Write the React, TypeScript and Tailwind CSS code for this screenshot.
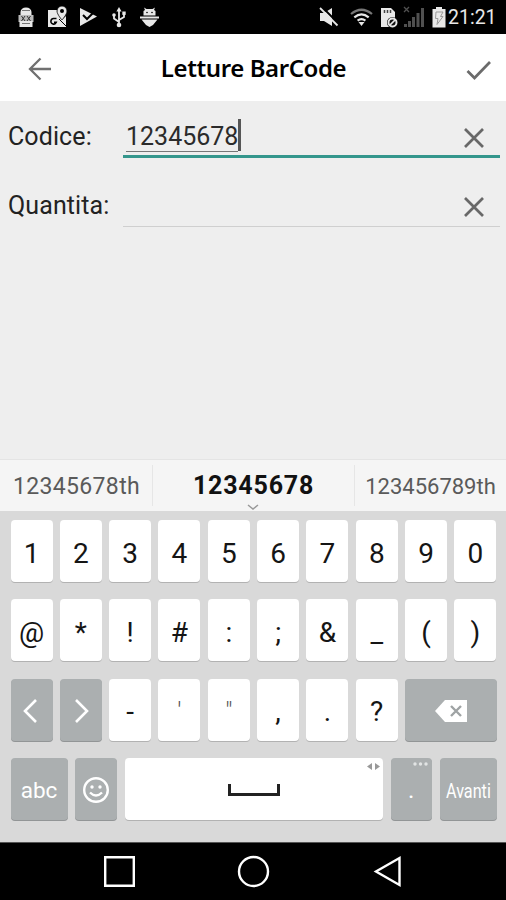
import type { ReactNode } from "react";
import clsx from "clsx";

const NUMBER_KEYS = ["1", "2", "3", "4", "5", "6", "7", "8", "9", "0"];
const SYMBOL_KEYS = ["@", "*", "!", "#", ":", ";", "&", "_", "(", ")"];
const PUNCTUATION_KEYS = ["-", "'", "\"", ",", ".", "?"];

interface KeyProps {
  children?: ReactNode;
  dark?: boolean;
  className?: string;
}

function Key({ children, dark, className = "w-[42px]" }: KeyProps) {
  return (
    <div
      className={clsx(
        "relative flex h-[62px] shrink-0 items-center justify-center rounded-[4px] text-[28px]",
        dark
          ? "bg-[#abafb0] text-white shadow-[0_1px_0_#929596]"
          : "bg-white text-[#151515] shadow-[0_1px_0_#b2b2b2]",
        className
      )}
    >
      {children}
    </div>
  );
}

function KeyRow({ children }: { children: ReactNode }) {
  return <div className="flex justify-between">{children}</div>;
}

// Plain character key, the glyph sits a little below the middle
function CharKey({ char }: { char: string }) {
  const quote = char === "'" || char === "\"";
  return (
    <Key>
      <span className={clsx("pt-[5px]", quote && "text-[25px] font-light text-[#555]")}>{char}</span>
    </Key>
  );
}

function StatusBar() {
  return (
    <div className="flex h-[34px] items-center bg-black pr-[9px] pl-[17px] text-[#e8e8e8]">
      {/* Notifications */}
      <div className="flex flex-1 items-center">
        <svg width="18" height="22" viewBox="0 0 18 22" fill="currentColor">
          <path d="M3.500 6Q4 1.500 9 1.500T14.500 6v3h-11z" />
          <path d="M1.500 9h15v7h-15z" opacity=".8" />
          <path d="M2.500 15h13v6h-13z" />
          <path d="M5 4.500h8M5 17.500h8" stroke="#777" />
          <path d="M4.500 10l3.500 5M8 10l-3.500 5M10 10l3.500 5M13.500 10L10 15" stroke="#333" strokeWidth="1" />
        </svg>
        <svg className="ml-[12px]" width="21" height="22" viewBox="0 0 21 22">
          <path d="M1 4h9l2 5 3 4 4-3v11H1z" fill="currentColor" />
          <path d="M9.500 12.500H7a2.800 2.800 0 1 0 2.300 3.800H7" fill="none" stroke="#000" strokeWidth="1.500" />
          <path d="M12 13l7 7" stroke="#000" strokeWidth="1" />
          <path d="M15 0a5 5 0 0 0-5 5c0 3.500 5 9 5 9s5-5.500 5-9a5 5 0 0 0-5-5z" fill="currentColor" stroke="#000" strokeWidth=".8" />
          <circle cx="15" cy="5" r="2" fill="#000" />
        </svg>
        <svg className="ml-[11px]" width="19" height="20" viewBox="0 0 19 20">
          <path d="M1 1l17 8.500L1 19z" fill="currentColor" />
          <path d="M4 8l4 4 8-8" fill="none" stroke="#000" strokeWidth="2" />
        </svg>
        <svg className="ml-[14px]" width="14" height="21" viewBox="0 0 14 21" fill="none" stroke="currentColor" strokeWidth="1.800">
          <path d="M7 3v15M7 15L2 11.500V8M7 13l5-3V6" />
          <path d="M7 0l2.600 4.500H4.400z" fill="currentColor" stroke="none" />
          <circle cx="7" cy="18" r="2.300" fill="currentColor" stroke="none" />
          <circle cx="2" cy="8" r="1.800" fill="currentColor" stroke="none" />
          <path d="M10.300 4.500h3.400v3.400h-3.400z" fill="currentColor" stroke="none" />
        </svg>
        <svg className="ml-[14px]" width="19" height="20" viewBox="0 0 19 20" fill="currentColor">
          <path d="M3.500 8.500V4l1.500-1L4 .5 6.500 2h6L15 .5 14 3l1.500 1v4.500z" />
          <path d="M0 9.500h19v2H0zM1.500 12.500h16L13 18l-3.500 2L6 18z" />
          <circle cx="7" cy="5.500" r=".8" fill="#000" />
          <circle cx="12" cy="5.500" r=".8" fill="#000" />
        </svg>
      </div>

      {/* System */}
      <svg width="21" height="20" viewBox="0 0 21 20">
        <path d="M1 6h4l8-5v18l-8-5H1z" fill="currentColor" />
        <path d="M3 0l17 17" stroke="#000" strokeWidth="2" />
        <path d="M1 1l17.500 17.500" stroke="currentColor" strokeWidth="1.800" />
      </svg>
      <svg className="ml-[10px]" width="23" height="18" viewBox="0 0 23 18" fill="none" stroke="currentColor" strokeWidth="2.200">
        <path d="M1 6Q11.500-2.500 22 6" stroke="#777" />
        <path d="M4.300 9.300q7.200-5.800 14.400 0" />
        <path d="M7.600 12.700q3.900-3 7.800 0" />
        <path d="M8.500 14h6l-3 4z" fill="currentColor" stroke="none" />
      </svg>
      <svg className="ml-[8px]" width="17" height="21" viewBox="0 0 17 21">
        <path d="M0 1h10l4 4v15H0z" fill="currentColor" />
        <path d="M3.500 3v3M6.500 3v3M9.500 3v3" stroke="#444" strokeWidth="1.500" />
        <circle cx="11.500" cy="15.500" r="5.500" fill="#111" />
        <circle cx="11.500" cy="15.500" r="4" fill="none" stroke="currentColor" strokeWidth="1.900" />
        <path d="M9 18l5-5" stroke="currentColor" strokeWidth="1.700" />
      </svg>
      <svg className="ml-[5px]" width="22" height="22" viewBox="0 0 22 22" fill="#505050">
        <path d="M1 18h3v3H1zM5 15h3v6H5zM9 11h3v10H9zM13.500 7h3v14h-3zM18 2h3v19h-3z" />
        <path d="M1 1l5 5M6 1L1 6" stroke="#505050" strokeWidth="1.300" />
      </svg>
      <svg className="ml-[7px]" width="14" height="21" viewBox="0 0 14 21">
        <path d="M4 0h6v2h3.500v18.500H.5V2H4z" fill="currentColor" />
        <path d="M4 5h7L8.500 9.500H11l-6 8 1-6H3.500z" fill="none" stroke="#999" />
      </svg>
      <span className="ml-[2px] w-[49px] pt-[1px] text-[19.500px] leading-none whitespace-nowrap">21:21</span>
    </div>
  );
}

function Header() {
  return (
    <header className="grid h-[67px] grid-cols-[50px_1fr_50px] items-center bg-white">
      <svg className="mt-[2px] ml-[28px]" width="24" height="24" viewBox="0 0 24 24" fill="none" stroke="#707070" strokeWidth="2.300">
        <path d="M23 12H2M12.500 1.500L2 12l10.500 10.500" />
      </svg>
      <h1 className="pl-[1px] text-center font-['Noto_Sans'] text-[24px] font-semibold tracking-[-0.42px] whitespace-nowrap text-black">
        Letture BarCode
      </h1>
      <svg className="mt-[4px] ml-[10px]" width="26" height="20" viewBox="0 0 26 20" fill="none" stroke="#6b6b6b" strokeWidth="2.700">
        <path d="M1.500 11L8.500 18 24 2" />
      </svg>
    </header>
  );
}

function ClearIcon() {
  return (
    <svg className="mr-[16px]" width="20" height="20" viewBox="0 0 20 20" fill="none" stroke="#686868" strokeWidth="2.700">
      <path d="M1 1l18 18M19 1L1 19" />
    </svg>
  );
}

interface FieldProps {
  label: string;
  value?: string;
  focused?: boolean;
}

function Field({ label, value, focused }: FieldProps) {
  return (
    <div className="flex h-[57px] pr-[6px] pl-[8px]">
      <label className="w-[115px] shrink-0 pt-[21px] text-[25px] leading-[30px] tracking-[0.1px] whitespace-nowrap text-[#222]">
        {label}
      </label>
      <div
        className={clsx(
          "flex flex-1 items-start justify-between pt-[18px] pl-[3px]",
          focused ? "border-b-[3px] border-[#34968c]" : "border-b border-[#cfcfcf]"
        )}
      >
        <div className="flex h-[33px]">
          {value && (
            <>
              <span className="h-[33px] border-b-[1.500px] border-[#777] text-[25px] leading-[35px] text-[#2b2b2b]">{value}</span>
              <span className="h-[32px] w-[3px] bg-[#555]" />
            </>
          )}
        </div>
        <div className="pt-[9px]">
          <ClearIcon />
        </div>
      </div>
    </div>
  );
}

function Suggestions() {
  return (
    <div className="relative grid h-[52px] grid-cols-[152px_203px_151px] items-center border-t border-[#e4e4e4] bg-[#f5f5f5] text-center whitespace-nowrap">
      <span className="pt-[3px] pl-[1px] text-[23px] tracking-[0.35px] text-[#5a5a5a]">12345678th</span>
      <span className="border-x border-[#e6e6e6] text-[25px] leading-[41px] font-bold tracking-[0.8px] text-[#111]">12345678</span>
      <span className="pt-[2px] text-[22px] text-[#5a5a5a]">123456789th</span>
      <svg className="absolute bottom-0 left-[247px]" width="12" height="7" viewBox="0 0 12 7" fill="none" stroke="#999" strokeWidth="1.500">
        <path d="M1 1l5 4 5-4" />
      </svg>
    </div>
  );
}

function Keyboard() {
  return (
    <div className="flex h-[331px] flex-col gap-[17.300px] bg-[#d9d9d9] pt-[9px] pr-[9.500px] pl-[10.500px]">
      <KeyRow>
        {NUMBER_KEYS.map((k) => (
          <CharKey key={k} char={k} />
        ))}
      </KeyRow>
      <KeyRow>
        {SYMBOL_KEYS.map((k) => (
          <CharKey key={k} char={k} />
        ))}
      </KeyRow>
      <KeyRow>
        <Key dark>
          <svg className="mt-[2px] mr-[3px]" width="16" height="26" viewBox="0 0 16 26" fill="none" stroke="currentColor" strokeWidth="2.600">
            <path d="M14 2L3 13l11 11" />
          </svg>
        </Key>
        <Key dark>
          <svg className="mt-[2px] ml-[3px]" width="16" height="26" viewBox="0 0 16 26" fill="none" stroke="currentColor" strokeWidth="2.600">
            <path d="M2 2l11 11L2 24" />
          </svg>
        </Key>
        {PUNCTUATION_KEYS.map((k) => (
          <CharKey key={k} char={k} />
        ))}
        <Key dark className="w-[91.500px]">
          <svg className="mt-[2px]" width="34" height="24" viewBox="0 0 34 24">
            <path d="M11 1h22v22H11L1 12z" fill="currentColor" />
            <path d="M17 7l10 10M27 7L17 17" stroke="#9fa3a4" strokeWidth="2.400" />
          </svg>
        </Key>
      </KeyRow>
      <KeyRow>
        <Key dark className="w-[57px]">
          <span className="pt-[4px] text-[22.500px]">abc</span>
        </Key>
        <Key dark>
          <svg className="mt-[2px]" width="28" height="28" viewBox="0 0 28 28" fill="none" stroke="currentColor" strokeWidth="2.400">
            <circle cx="14" cy="14" r="11.800" />
            <path d="M8 16.500q6 6 12 0" />
            <circle cx="10" cy="11" r="1.700" fill="currentColor" stroke="none" />
            <circle cx="18" cy="11" r="1.700" fill="currentColor" stroke="none" />
          </svg>
        </Key>
        <Key className="w-[258px]">
          <svg className="mt-[2px]" width="52" height="12" viewBox="0 0 52 12" fill="none" stroke="#222" strokeWidth="3">
            <path d="M1.500 0v10.500h49V0" />
          </svg>
          <svg className="absolute top-[5px] right-[3px]" width="13" height="7" viewBox="0 0 13 7" fill="#999">
            <path d="M5 0v7L0 3.500zM8 0v7l5-3.500z" />
          </svg>
        </Key>
        <Key dark className="w-[41px]">
          <span className="pt-[3px] text-[24px]">.</span>
          <svg className="absolute top-[4px] right-[4px]" width="15" height="4" viewBox="0 0 15 4" fill="#e2e4e4">
            <circle cx="2" cy="2" r="1.700" />
            <circle cx="7.500" cy="2" r="1.700" />
            <circle cx="13" cy="2" r="1.700" />
          </svg>
        </Key>
        <Key dark className="w-[57px]">
          <span className="scale-x-[0.79] pt-[4px] text-[20.500px]">Avanti</span>
        </Key>
      </KeyRow>
    </div>
  );
}

function NavBar() {
  return (
    <nav className="flex h-[58px] items-center justify-between border-t border-[#555] bg-black pr-[104px] pl-[103px] text-white">
      <svg width="33" height="33" viewBox="0 0 33 33" fill="none" stroke="currentColor" strokeWidth="2.400">
        <path d="M2.200 2.200h28.600v28.600H2.200z" />
      </svg>
      <svg className="mr-[2px]" width="33" height="33" viewBox="0 0 33 33" fill="none" stroke="currentColor" strokeWidth="2.400">
        <circle cx="16.500" cy="16.500" r="14.500" />
      </svg>
      <svg width="29" height="33" viewBox="0 0 29 33" fill="none" stroke="currentColor" strokeWidth="2.400">
        <path d="M26.500 3v27L3 16.500z" />
      </svg>
    </nav>
  );
}

export default function App() {
  return (
    <div className="flex h-[900px] w-[506px] flex-col overflow-hidden bg-[#eee] font-['Roboto',sans-serif]">
      <StatusBar />
      <Header />
      <main className="flex flex-1 flex-col gap-[12px]">
        <Field label="Codice:" value="12345678" focused />
        <Field label="Quantita:" />
      </main>
      <Suggestions />
      <Keyboard />
      <NavBar />
    </div>
  );
}
